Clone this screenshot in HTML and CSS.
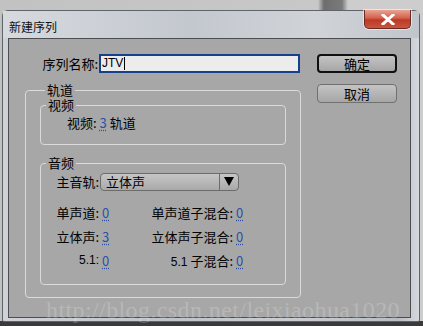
FILE: index.html
```html
<!DOCTYPE html>
<html lang="zh-CN">
<head>
    <meta charset="UTF-8">
    <meta name="viewport" content="width=device-width, initial-scale=1.0">
    <title>新建序列</title>
    <link rel="stylesheet" href="styles.css">
</head>
<body>
    <div class="window">
        <div class="titlebar">
            <span class="title">新建序列</span>
            <div class="close-btn">
                <svg width="14" height="11" viewBox="0 0 14 11">
                    <path d="M2 1 L12 10 M12 1 L2 10" stroke="#ffffff" stroke-width="3" stroke-linecap="square"/>
                </svg>
            </div>
        </div>
        <div class="client">
            <div class="form-col">
                <div class="name-row">
                    <label class="name-label">序列名称:</label>
                    <div class="name-input">JTV<span class="caret"></span></div>
                </div>

                <fieldset class="group outer">
                    <legend>轨道</legend>
                    <fieldset class="group video">
                        <legend>视频</legend>
                        <div class="video-row">视频: <span class="val">3</span> 轨道</div>
                    </fieldset>
                    <fieldset class="group audio">
                        <legend>音频</legend>
                        <div class="master-row">
                            <span class="lbl">主音轨:</span>
                            <div class="select">
                                <span class="select-text">立体声</span>
                                <span class="select-arrow">
                                    <svg width="10" height="9" viewBox="0 0 10 9"><path d="M0 0 H10 L5 9 Z" fill="#000"/></svg>
                                </span>
                            </div>
                        </div>
                        <div class="track-grid">
                            <span class="lbl">单声道:</span><span class="v"><span class="val">0</span></span>
                            <span class="lbl">单声道子混合:</span><span class="v"><span class="val">0</span></span>
                            <span class="lbl">立体声:</span><span class="v"><span class="val">3</span></span>
                            <span class="lbl">立体声子混合:</span><span class="v"><span class="val">0</span></span>
                            <span class="lbl latin">5.1:</span><span class="v"><span class="val">0</span></span>
                            <span class="lbl"><span class="latin">5.1</span> 子混合:</span><span class="v"><span class="val">0</span></span>
                        </div>
                    </fieldset>
                </fieldset>
            </div>
            <div class="btn-col">
                <button class="btn default">确定</button>
                <button class="btn">取消</button>
            </div>
            <div class="watermark">http://blog.csdn.net/leixiaohua1020</div>
        </div>
    </div>
</body>
</html>
```

FILE: styles.css
```css
*{
    margin: 0;
    padding: 0;
    box-sizing: border-box;
}
body{
    width: 423px;
    height: 326px;
    overflow: hidden;
    padding: 10px 0 0 2px;
    font-family: "Noto Sans CJK SC", "Liberation Sans", sans-serif;
    font-size: 13px;
    color: #000;
    background:
        linear-gradient(to bottom, transparent 321px, #3a3a3a 321px),
        linear-gradient(to right, #c2c2c2 0, #c8c8c8 318px, #6e6e6e 324px, #7a7a7a 342px, #cdcdcd 348px);
}
.window{
    width: 418px;
    height: 312px;
    border: 1px solid #5f646b;
    border-radius: 6px 6px 2px 2px;
    background: linear-gradient(to right, #cfd3d8, #bfc4ca 40%, #c9cdd2 70%, #b9bec4 95%, #d5d9de);
    position: relative;
}
.titlebar{
    height: 27px;
    display: flex;
    justify-content: space-between;
    align-items: flex-start;
    padding-left: 6px;
    background: linear-gradient(to right, #d6dadf, #c3c8ce 45%, #d0d4d9 75%, #c0c5cb);
}
.title{
    font-size: 12px;
    line-height: 18px;
    padding-top: 7px;
    color: #111;
}
.close-btn{
    width: 47px;
    height: 19px;
    margin-right: 8px;
    margin-top: -1px;
    border: 1px solid #6b2a22;
    border-top: none;
    border-radius: 0 0 5px 5px;
    background: linear-gradient(to bottom, #e9a394, #d4604c 45%, #bb3a26 55%, #c9553f);
    display: flex;
    justify-content: center;
    align-items: center;
    box-shadow: 0 0 0 1px rgba(255,255,255,0.5);
}
.client{
    position: relative;
    margin: 0 8px 0 5px;
    height: 280px;
    background: #a7a7a7;
    border: 1px solid #4b4d50;
    display: grid;
    grid-template-columns: 293px 80px;
    column-gap: 15px;
    align-items: start;
    padding-top: 15px;
}
.name-row{
    display: flex;
    align-items: center;
    height: 19px;
}
.name-label{
    width: 90px;
    text-align: right;
    padding-right: 1px;
}
.name-input{
    width: 201px;
    height: 19px;
    border: 2px solid #15408e;
    background: #ececec;
    font-family: "Liberation Sans", sans-serif;
    font-size: 12px;
    line-height: 15px;
    padding-left: 1px;
    display: flex;
    align-items: center;
}
.caret{
    display: inline-block;
    width: 1px;
    height: 13px;
    background: #000;
    margin-left: 1px;
}
.group{
    border: 1px solid #dadada;
    border-radius: 4px;
    min-width: 0;
}
.group legend{
    margin-left: 5px;
    padding: 0 2px;
    line-height: 14px;
}
.outer{
    margin: 10px 0 0 16px;
    width: 276px;
    padding: 0 14px 12px 14px;
}
.video{
    margin-top: 1px;
    padding: 0 0 13px 0;
}
.video-row{
    line-height: 17px;
    margin-top: 2px;
    padding-left: 26px;
}
.val{
    color: #2c4fa6;
    text-decoration: underline dotted #2c4fa6;
    text-underline-offset: 2px;
}
.audio{
    margin-top: 11px;
    padding: 0 0 12px 0;
}
.master-row{
    display: flex;
    align-items: center;
    margin-top: 2px;
}
.lbl{
    text-align: right;
}
.master-row .lbl{
    width: 58px;
}
.select{
    margin-left: 1px;
    width: 139px;
    height: 18px;
    border: 1px solid #6c6c6c;
    border-radius: 4px;
    background: linear-gradient(to bottom, #c6c6c6, #a9a9a9);
    display: flex;
}
.select-text{
    flex: 1;
    padding-left: 5px;
    line-height: 16px;
}
.select-arrow{
    width: 19px;
    border-left: 1px solid #6c6c6c;
    display: flex;
    justify-content: center;
    align-items: center;
}
.track-grid{
    display: grid;
    grid-template-columns: 58px 41px 93px 40px;
    grid-auto-rows: 24px;
    align-items: center;
    margin-top: 9px;
}
.v{
    padding-left: 3px;
}
.latin{
    font-family: "Liberation Sans", sans-serif;
    font-size: 12px;
}
.btn-col{
    display: flex;
    flex-direction: column;
    gap: 11px;
}
.btn{
    width: 80px;
    height: 19px;
    font-family: "Noto Sans CJK SC", sans-serif;
    font-size: 13px;
    line-height: 15px;
    border: 1px solid #707070;
    border-radius: 4px;
    background: linear-gradient(to bottom, #c4c4c4, #a6a6a6);
    color: #000;
}
.btn.default{
    border: 2px solid #101010;
}
.watermark{
    position: absolute;
    left: 37px;
    top: 258px;
    font-family: "Liberation Serif", serif;
    font-size: 24px;
    letter-spacing: 0.4px;
    color: rgba(255,255,255,0.2);
    white-space: nowrap;
    pointer-events: none;
}
```
